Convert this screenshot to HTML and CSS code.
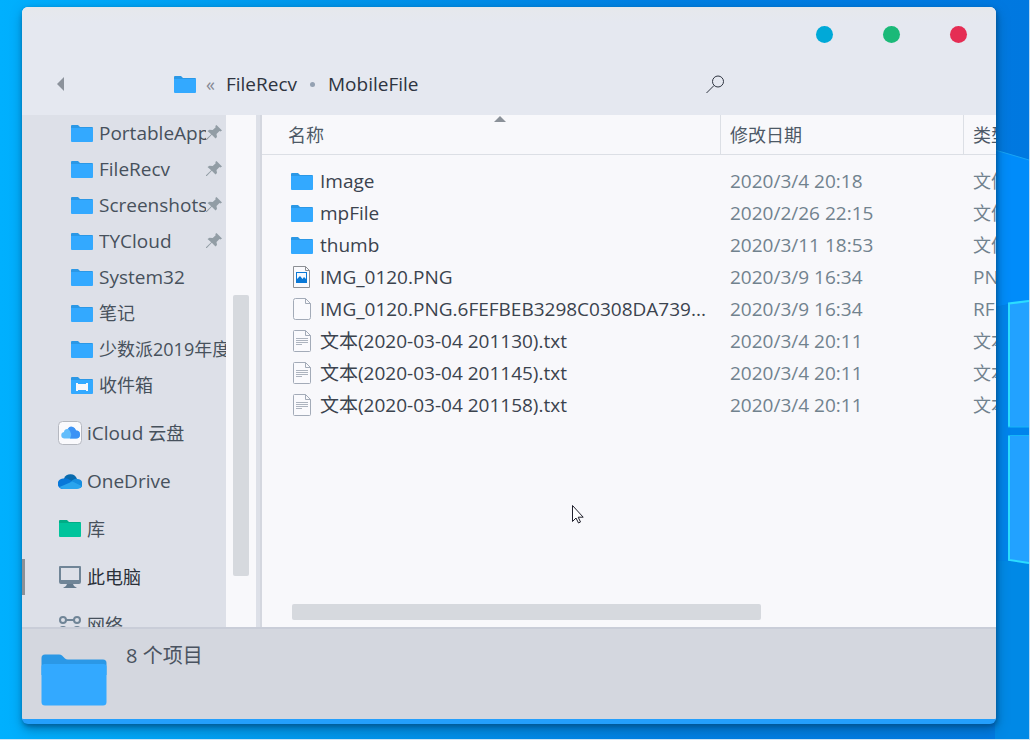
FILE: index.html
```html
<!DOCTYPE html>
<html lang="zh-CN">
<head>
<meta charset="utf-8">
<title>MobileFile</title>
<link rel="stylesheet" href="styles.css">
</head>
<body class="desktop">
<svg width="0" height="0" class="defs" aria-hidden="true">
  <defs>
    <symbol id="folder" viewBox="0 0 22 17">
      <path d="M0 1q0-1 1-1h6l2 2h12q1 0 1 1v4H0z" fill="#2b98e6"/>
      <path d="M0 3h22v13q0 1-1 1H1q-1 0-1-1z" fill="#33a9ff"/>
    </symbol>
    <symbol id="pin" viewBox="0 0 16 16">
      <path d="M10.500 0 16 5.500l-1.500 1-1-.5-3 3 .5 3-1.500 1.500-3.700-3.700L.8 15H0v-.8l5.200-5L1.500 6 3.500 4.700l3.200.3 3-2.700L9.300 1z" fill="#929da5"/>
    </symbol>
    <symbol id="text-file" viewBox="0 0 18 22">
      <path d="M1.500.5h11l5 5v15q0 1-1 1h-15q-1 0-1-1v-19q0-1 1-1zM12.500.5v5h5" fill="#fafafd" stroke="#a3abb8"/>
      <path d="M3 8.500h12M3 10.500h12M3 12.500h12M3 14.500h6" stroke="#adb4bf"/>
    </symbol>
  </defs>
</svg>
<svg class="wallpaper" viewBox="0 0 34 740" aria-hidden="true">
  <path d="M0 150 34 160V300L0 307z" fill="#008cfa"/>
  <path d="M0 307 34 300V563L0 560z" fill="#0084ec"/>
  <path d="M0 560 34 563V740H0z" fill="#0089e6"/>
  <path d="M13 303.500 34 300v127H13zM13 435h21v127.500L13 560z" fill="#22a2ff"/>
  <path d="M34 301 14 303.500V427M14 435.500V560l20 3" fill="none" stroke="#2cdcff" stroke-width="2"/>
  <path d="M13 435.500h21M13 427h21" stroke="#16b4f8"/>
  <path d="M0 150 34 160" stroke="#19a6f5"/>
</svg>

<main class="window">
  <header class="header">
    <div class="titlebar">
      <button class="dot minimize" aria-label="最小化"></button>
      <button class="dot maximize" aria-label="最大化"></button>
      <button class="dot close" aria-label="关闭"></button>
    </div>
    <div class="toolbar">
      <button class="back" aria-label="后退"><svg width="7" height="14" viewBox="0 0 7 14"><path d="M7 0v14L0 7z" fill="#8c929b"/></svg></button>
      <nav class="crumbs" aria-label="路径">
        <svg class="folder"><use href="#folder"/></svg>
        <span class="more">«</span>
        <a href="#filerecv">FileRecv</a>
        <i class="separator"></i>
        <a href="#mobilefile">MobileFile</a>
      </nav>
      <div class="search">
        <label for="search"><svg width="19" height="19" viewBox="0 0 19 19"><circle cx="12" cy="6.500" r="5.500"/><path d="M8 10.500.5 18"/></svg></label>
        <input id="search" type="search" aria-label="搜索">
      </div>
    </div>
  </header>

  <div class="content">
    <nav class="sidebar" aria-label="导航窗格">
      <a class="item" href="#1"><svg class="folder"><use href="#folder"/></svg><span class="label">PortableApps</span><svg class="pin"><use href="#pin"/></svg></a>
      <a class="item" href="#2"><svg class="folder"><use href="#folder"/></svg><span class="label">FileRecv</span><svg class="pin"><use href="#pin"/></svg></a>
      <a class="item" href="#3"><svg class="folder"><use href="#folder"/></svg><span class="label">Screenshots</span><svg class="pin"><use href="#pin"/></svg></a>
      <a class="item" href="#4"><svg class="folder"><use href="#folder"/></svg><span class="label">TYCloud</span><svg class="pin"><use href="#pin"/></svg></a>
      <a class="item" href="#5"><svg class="folder"><use href="#folder"/></svg><span class="label">System32</span></a>
      <a class="item zh" href="#6"><svg class="folder"><use href="#folder"/></svg><span class="label">笔记</span></a>
      <a class="item zh" href="#7"><svg class="folder"><use href="#folder"/></svg><span class="label">少数派2019年度</span></a>
      <a class="item zh" href="#8"><svg class="folder" viewBox="0 0 22 17"><use href="#folder"/><path d="M5 6h2v1h8V6h2v8h-2v-1H7v1H5z" fill="#f8f8fb"/></svg><span class="label">收件箱</span></a>
      <a class="item root" href="#9"><svg class="root-icon" viewBox="0 0 24 24"><rect x=".5" y=".5" width="23" height="23" rx="4" fill="#fafafd" stroke="#b5b8c0"/><path d="M6 17.500a3.300 3.300 0 0 1 0-6.500 3 3 0 0 1 3.500-3A4.800 4.800 0 0 1 18 9.500a3.900 3.900 0 0 1 0 8z" fill="#62bdfb"/><path d="M10 7.500Q12 4.500 15 6q2.500 1 3 3.500a3.900 3.900 0 0 1 0 8h-6q3-5-2-10z" fill="#3c93f5"/></svg><span class="label">iCloud <span class="zh">云盘</span></span></a>
      <a class="item root" href="#10"><svg class="root-icon" viewBox="0 0 24 24"><path d="M6 9.500a7 7 0 0 1 13 .5l-3 6H8z" fill="#086aad"/><path d="M5 20A5.200 5.200 0 0 1 5 9.500q4-1 7 1.500l4 2L6 19z" fill="#0778d9"/><path d="M12 13.500Q16 9 19.500 10a5 5 0 0 1 3 9L12 16z" fill="#168ee0"/><path d="M1.500 18 14.500 12.500 23.500 17q-1 3-4.500 3H5q-2 0-3.500-2z" fill="#2aa5ee"/></svg><span class="label">OneDrive</span></a>
      <a class="item root zh" href="#11"><svg class="root-icon" viewBox="0 0 24 24"><path d="M1 4q0-1 1-1h7l2 2h11q1 0 1 1v3H1z" fill="#00ad86"/><path d="M1 6h22v13q0 1-1 1H2q-1 0-1-1z" fill="#00c49c"/></svg><span class="label">库</span></a>
      <a class="item root active zh" href="#12"><svg class="root-icon" viewBox="0 0 24 24"><path d="M2 1h20q1 0 1 1v15q0 2-2 2H3q-2 0-2-2V2q0-1 1-1zm1 2v12h18V3z" fill="#708597" fill-rule="evenodd"/><path d="M9 19h6l1 2 3 2H5l3-2z" fill="#647a8d"/></svg><span class="label">此电脑</span></a>
      <a class="item root zh" href="#13"><svg class="root-icon" viewBox="0 0 24 24"><g fill="none" stroke="#708597" stroke-width="2"><circle cx="5" cy="7" r="3"/><circle cx="19" cy="7" r="3"/><circle cx="5" cy="17" r="3"/><circle cx="19" cy="17" r="3"/><path d="M8 7h8"/></g></svg><span class="label">网络</span></a>
    </nav>
    <div class="scroll-track"><div class="thumb"></div></div>

    <section class="files">
      <svg class="sort" viewBox="0 0 12 6" aria-hidden="true"><path d="M6 0 12 6H0z" fill="#8b9199"/></svg>
      <table>
        <colgroup><col class="col-name"><col class="col-date"><col></colgroup>
        <thead><tr><th>名称</th><th>修改日期</th><th>类型</th></tr></thead>
        <tbody>
          <tr><td><div class="file"><svg class="folder"><use href="#folder"/></svg>Image</div></td><td>2020/3/4 20:18</td><td class="zh">文件夹</td></tr>
          <tr><td><div class="file"><svg class="folder"><use href="#folder"/></svg>mpFile</div></td><td>2020/2/26 22:15</td><td class="zh">文件夹</td></tr>
          <tr><td><div class="file"><svg class="folder"><use href="#folder"/></svg>thumb</div></td><td>2020/3/11 18:53</td><td class="zh">文件夹</td></tr>
          <tr><td><div class="file"><svg class="doc" viewBox="0 0 18 22"><path d="M.5.5h12l4 4v17H.5zM12.500.5v4h4" fill="#fafafd" stroke="#8c8f94"/><path d="M3 6h11v11H3z" fill="#0a78d6"/><path d="M4 7h9v6l-2-2-1.500 2L7 10l-3 3z" fill="#f4f9ff"/></svg>IMG_0120.PNG</div></td><td>2020/3/9 16:34</td><td>PNG</td></tr>
          <tr><td><div class="file"><svg class="doc" viewBox="0 0 18 22"><path d="M2.500.5h10l5 5v14q0 2-2 2h-13q-2 0-2-2v-17q0-2 2-2zM12.500.5v5h5" fill="#fafafd" stroke="#a3abb8"/></svg>IMG_0120.PNG.6FEFBEB3298C0308DA739...</div></td><td>2020/3/9 16:34</td><td>RF</td></tr>
          <tr><td><div class="file"><svg class="doc"><use href="#text-file"/></svg>文本(2020-03-04 201130).txt</div></td><td>2020/3/4 20:11</td><td class="zh">文本</td></tr>
          <tr><td><div class="file"><svg class="doc"><use href="#text-file"/></svg>文本(2020-03-04 201145).txt</div></td><td>2020/3/4 20:11</td><td class="zh">文本</td></tr>
          <tr><td><div class="file"><svg class="doc"><use href="#text-file"/></svg>文本(2020-03-04 201158).txt</div></td><td>2020/3/4 20:11</td><td class="zh">文本</td></tr>
        </tbody>
      </table>
      <div class="horizontal-thumb"></div>
    </section>
  </div>

  <footer class="status">
    <svg class="large-folder" viewBox="0 0 66 52"><path d="M.5 4q0-3.500 3.500-3.500h14q2 0 3 1l3 3q1 1 3 1h35q3.500 0 3.500 3.500v12H.5z" fill="#2b98e6"/><path d="M.5 13q0-3 3-3h59q3 0 3 3v35q0 3.500-3.500 3.500H4Q.5 51.500.5 48z" fill="#33a9ff"/></svg>
    <span>8 个项目</span>
  </footer>
</main>
<svg class="cursor" viewBox="0 0 12 19" aria-hidden="true"><path d="M.5.5v16l3.500-3.500 2.500 5 2-1-2.300-4.800h5z" fill="#fff" stroke="#20202c"/></svg>
</body>
</html>
```

FILE: styles.css
```css
* { box-sizing: border-box; }

.desktop {
  position: relative;
  display: flex;
  min-height: 100vh;
  margin: 0;
  padding: 7px 33px 15px 22px;
  overflow: hidden;
  border-right: 1px solid #b9d8f4;
  border-bottom: 1px solid #cde4f5;
  font: 19px/24px "Open Sans", "Noto Sans CJK SC", sans-serif;
  color: #3b434e;
  background: linear-gradient(to right, #00b0fe, #0098ec 30%, #007fe2 65%, #0078e0);
}

.defs { position: absolute; }

.wallpaper {
  position: absolute;
  top: 0;
  right: 0;
  width: 34px;
  height: 740px;
}

a { color: inherit; text-decoration: none; }
button { padding: 0; border: 0; background: none; }
svg { display: block; flex: none; }
.zh { font-size: 18px; }

.window {
  position: relative;
  display: flex;
  flex: 1;
  flex-direction: column;
  min-width: 0;
  overflow: hidden;
  border-bottom: 5px solid #249ffc;
  border-radius: 6px;
  background: #f8f8fb;
  box-shadow: 1px 2px 4px #00488099, 1px 5px 12px #00508099;
}

.header {
  padding-bottom: 8px;
  background: linear-gradient(#e6e8ec, #e5e8f0 16px);
}

.titlebar {
  display: flex;
  align-items: center;
  justify-content: flex-end;
  gap: 50px;
  height: 54px;
  padding-right: 29px;
}

.dot { width: 17px; height: 17px; border-radius: 50%; }
.minimize { background: #00a9d8; }
.maximize { background: #1bb978; }
.close { background: #e52d54; }

.toolbar {
  display: grid;
  grid-template-columns: 117px 1fr 290px;
  align-items: center;
  height: 46px;
  padding-left: 35px;
}

.back { justify-self: start; }
.crumbs { display: flex; align-items: center; color: #2e3440; }
.folder { width: 22px; height: 17px; }
.more { margin: 0 11px 0 10px; font-size: 18px; color: #858995; }
.separator { width: 5px; height: 5px; margin: 0 13px; border-radius: 50%; background: #94a1b2; }
.search { display: flex; align-items: center; gap: 12px; }
.search svg { fill: none; stroke: #2e3440; }
.search input { flex: 1; min-width: 0; height: 30px; border: 0; outline: 0; background: transparent; }

.content {
  display: grid;
  grid-template-columns: 204px 30px 6px 1fr;
  flex: 1 1 0;
  min-height: 0;
  background: linear-gradient(to right, #f8f8fb 234px, #dde0e8 234px 238px, #d4d7df 238px 240px, #f8f8fb 240px);
}

.sidebar {
  min-height: 0;
  overflow: hidden;
  color: #47515c;
  background: #dde0e8;
}

.item {
  display: flex;
  align-items: center;
  height: 36px;
  padding-left: 49px;
  white-space: nowrap;
}

.label { flex: 1; min-width: 0; margin-left: 6px; overflow: hidden; }
.pin { width: 16px; height: 16px; margin-right: 4px; }
.root { margin-top: 12px; padding-left: 36px; }
.root .label { margin-left: 5px; }
.root-icon { width: 24px; height: 24px; }
.active { color: #2a3039; box-shadow: inset 3px 0 #8b9096; }

.scroll-track { min-height: 0; padding: 180px 7px 0; }
.thumb { height: 281px; border-radius: 2px; background: #d6d9de; }

.files {
  position: relative;
  display: flex;
  grid-column: 4;
  flex-direction: column;
  justify-content: space-between;
  min-width: 0;
  overflow: hidden;
}

.sort { position: absolute; top: 1px; left: 232px; width: 12px; height: 6px; }

table { width: 100%; table-layout: fixed; border-collapse: separate; border-spacing: 0; }
.col-name { width: 459px; }
.col-date { width: 243px; }

th, td {
  padding: 0 0 0 9px;
  overflow: hidden;
  text-align: left;
  white-space: nowrap;
}

th {
  height: 40px;
  border-right: 1px solid #dcdfe5;
  border-bottom: 1px solid #dcdfe5;
  font-size: 18px;
  font-weight: 400;
  color: #4d5966;
}

th:first-child { padding-left: 26px; }
th:last-child { border-right: 0; }
tbody::before { display: block; height: 10px; content: ""; }
td { height: 32px; color: #71828e; }
td:first-child { padding-left: 29px; color: #3b434e; }
.file { display: flex; align-items: center; }
.file .folder { margin-right: 7px; }
.doc { width: 18px; height: 22px; margin: 0 9px 0 2px; }

.horizontal-thumb {
  width: 469px;
  height: 16px;
  margin: 0 0 7px 30px;
  border-radius: 2px;
  background: #d6d9de;
}

.status {
  display: flex;
  gap: 19px;
  height: 92px;
  padding: 15px 19px;
  border-top: 2px solid #c9cdd8;
  font-size: 20px;
  color: #4a5360;
  background: #d4d7df;
}

.large-folder { width: 66px; height: 52px; margin-top: 10px; }

.cursor { position: absolute; top: 505px; left: 572px; width: 12px; height: 19px; }
```
